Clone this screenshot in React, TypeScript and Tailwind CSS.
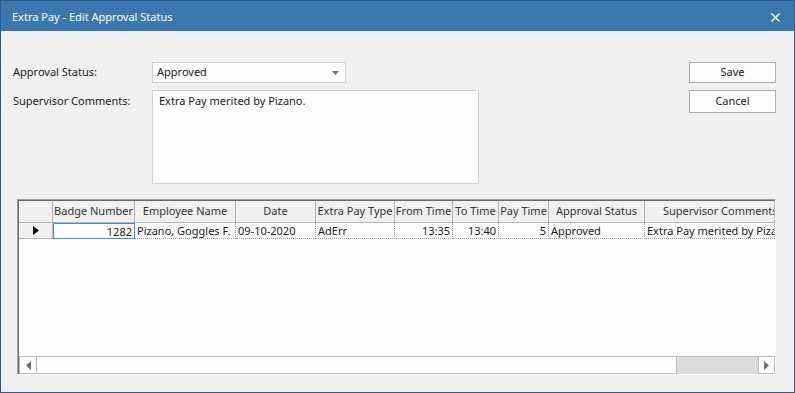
import React from "react";

interface Column {
  title: string;
  width: string;
  align: "left" | "right";
  value: string;
  headerClass?: string;
}

const columns: Column[] = [
  { title: "Badge Number", width: "w-[82px]", align: "right", value: "1282" },
  { title: "Employee Name", width: "w-[101px]", align: "left", value: "Pizano, Goggles F." },
  { title: "Date", width: "w-[80px]", align: "left", value: "09-10-2020" },
  { title: "Extra Pay Type", width: "w-[79px]", align: "left", value: "AdErr" },
  { title: "From Time", width: "w-[58px]", align: "right", value: "13:35" },
  { title: "To Time", width: "w-[46px]", align: "right", value: "13:40" },
  { title: "Pay Time", width: "w-[50px]", align: "right", value: "5" },
  { title: "Approval Status", width: "w-[96px]", align: "left", value: "Approved" },
  {
    title: "Supervisor Comments",
    width: "w-[130px]",
    align: "left",
    value: "Extra Pay merited by Pizano.",
    headerClass: "justify-start pl-[18px]",
  },
];

const Arrow: React.FC<{ dir: "left" | "right" }> = ({ dir }) => (
  <svg width="5" height="9" viewBox="0 0 5 9" className="shrink-0">
    {dir === "left" ? (
      <polygon points="5,0 5,9 0,4.5" fill="#6e6e6e" />
    ) : (
      <polygon points="0,0 0,9 5,4.5" fill="#6e6e6e" />
    )}
  </svg>
);

const DataGrid: React.FC = () => {
  return (
    <div className="ml-[16px] mt-[15px] w-[759px] h-[176px] border-l border-t border-[#a0a0a0] border-r-white border-b-white border-r border-b">
      <div className="h-full border-l border-t border-[#696969] bg-[#fdfdfd] flex flex-col overflow-hidden">
        {/* header */}
        <div className="flex h-[22px] shrink-0 text-[#333333]">
          <div className="w-[34px] shrink-0 bg-[#f0f0f0] border-r border-b border-[#b4b4b4]" />
          {columns.map((col) => (
            <div
              key={col.title}
              className={`${col.width} shrink-0 bg-[#f0f0f0] border-r border-b border-[#b4b4b4] flex items-center whitespace-nowrap overflow-hidden ${
                col.headerClass ?? "justify-center"
              }`}
            >
              {col.title}
            </div>
          ))}
        </div>
        {/* row */}
        <div className="flex h-[16px] shrink-0">
          <div className="w-[34px] shrink-0 bg-[#f0f0f0] border-r border-b border-[#b4b4b4] flex items-center justify-center">
            <svg width="6" height="9" viewBox="0 0 6 9">
              <polygon points="0,0 0,9 6,4.5" fill="#000" />
            </svg>
          </div>
          {columns.map((col, index) => (
            <div
              key={col.title}
              className={`${col.width} shrink-0 flex items-center whitespace-nowrap overflow-hidden leading-none ${
                col.align === "right" ? "justify-end pr-[2px]" : "justify-start pl-[2px]"
              } ${
                index === 0
                  ? "border border-[#3c8fdc]"
                  : "border-r border-b border-dotted border-[#a0a0a0]"
              }`}
            >
              {col.value}
            </div>
          ))}
        </div>
        <div className="flex-1" />
        {/* horizontal scrollbar */}
        <div className="flex h-[18px] shrink-0 border-t border-[#bcbcbc] bg-[#dcdcdc]">
          <div className="w-[18px] shrink-0 bg-[#fdfdfd] border-x border-b border-[#bcbcbc] flex items-center justify-center">
            <Arrow dir="left" />
          </div>
          <div className="w-[640px] shrink-0 bg-[#fdfdfd] border-r border-b border-[#bcbcbc]" />
          <div className="flex-1" />
          <div className="w-[17px] shrink-0 bg-[#fdfdfd] border border-t-0 border-[#bcbcbc] flex items-center justify-center">
            <Arrow dir="right" />
          </div>
        </div>
      </div>
    </div>
  );
};

const App: React.FC = () => {
  return (
    <div className="w-[795px] h-[393px] border border-[#2a5c90] bg-[#f0f0f0] flex flex-col font-['Noto_Sans',sans-serif] text-[11px] text-[#1b1b1b] overflow-hidden">
      {/* title bar */}
      <div className="h-[30px] shrink-0 bg-[#3d77b0] flex items-center justify-between pl-[11px] pr-[14px] text-white">
        <span className="pt-[2px]">Extra Pay - Edit Approval Status</span>
        <svg width="9" height="9" viewBox="0 0 9 9" className="mt-[3px]">
          <path d="M0.5 0.5 L8.5 8.5 M8.5 0.5 L0.5 8.5" stroke="#fff" strokeWidth="1.3" />
        </svg>
      </div>

      {/* form */}
      <div className="flex justify-between pt-[31px] pl-[12px] pr-[18px]">
        <div className="grid grid-cols-[139px_auto] gap-y-[7px]">
          <div className="h-[21px] flex items-center">Approval Status:</div>
          <div className="w-[194px] h-[21px] bg-[#fdfdfd] border border-[#d2d2d2] flex items-center justify-between pl-[4px] pr-[6px]">
            <span>Approved</span>
            <svg width="7" height="4" viewBox="0 0 7 4">
              <polygon points="0,0 7,0 3.5,4" fill="#707070" />
            </svg>
          </div>
          <div className="pt-[3px]">Supervisor Comments:</div>
          <div className="w-[327px] h-[94px] bg-[#fdfdfd] border border-[#d2d2d2] pl-[6px] pt-[2px]">
            Extra Pay merited by Pizano.
          </div>
        </div>
        <div className="flex flex-col gap-[7px]">
          <button className="w-[87px] h-[21px] bg-[#fdfdfd] border border-[#adadad] flex items-center justify-center">
            Save
          </button>
          <button className="w-[87px] h-[23px] bg-[#fdfdfd] border border-[#adadad] flex items-center justify-center">
            Cancel
          </button>
        </div>
      </div>

      <DataGrid />
    </div>
  );
};

export default App;
